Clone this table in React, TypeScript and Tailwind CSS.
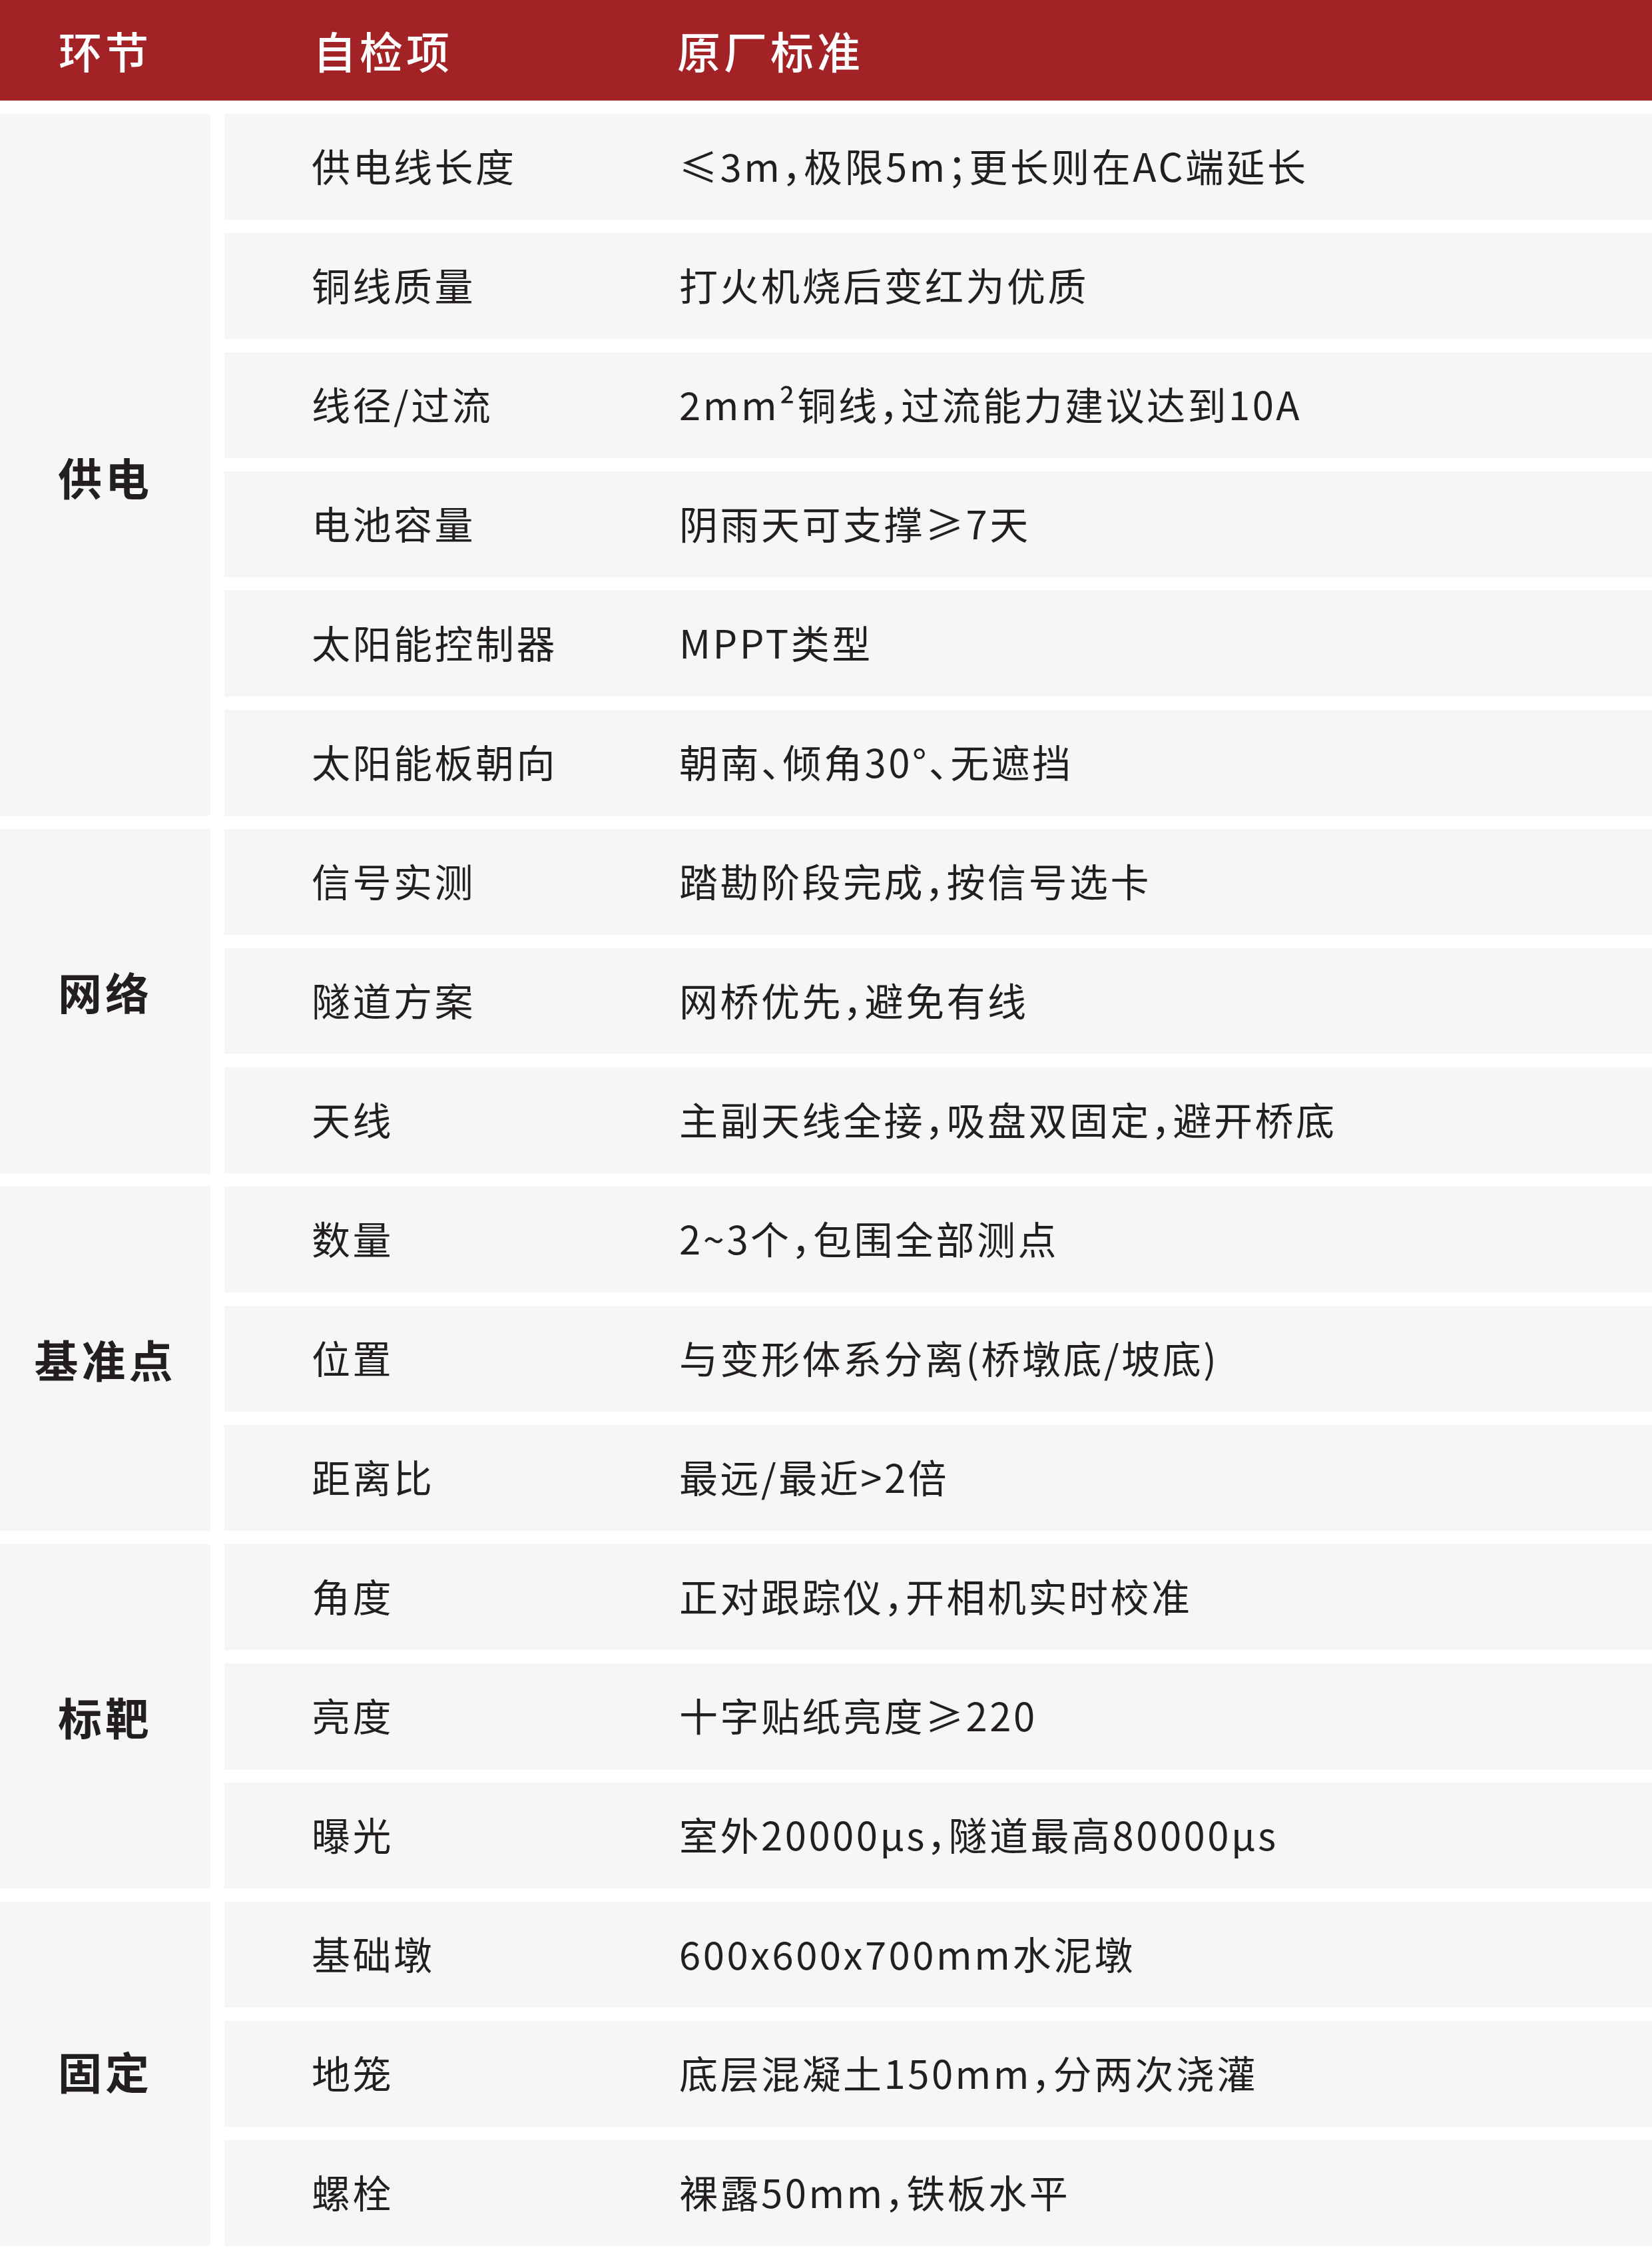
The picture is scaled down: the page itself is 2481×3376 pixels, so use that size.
import React from "react";

type Row = { item: string; standard: string };
type Group = { name: string; shift: string; rows: Row[] };

const groups: Group[] = [
  {
    name: "供电",
    shift: "pt-[34px]",
    rows: [
      { item: "供电线长度", standard: "≤3m，极限5m；更长则在AC端延长" },
      { item: "铜线质量", standard: "打火机烧后变红为优质" },
      { item: "线径/过流", standard: "2mm²铜线，过流能力建议达到10A" },
      { item: "电池容量", standard: "阴雨天可支撑≥7天" },
      { item: "太阳能控制器", standard: "MPPT类型" },
      { item: "太阳能板朝向", standard: "朝南、倾角30°、无遮挡" },
    ],
  },
  {
    name: "网络",
    shift: "pb-[30px]",
    rows: [
      { item: "信号实测", standard: "踏勘阶段完成，按信号选卡" },
      { item: "隧道方案", standard: "网桥优先，避免有线" },
      { item: "天线", standard: "主副天线全接，吸盘双固定，避开桥底" },
    ],
  },
  {
    name: "基准点",
    shift: "",
    rows: [
      { item: "数量", standard: "2~3个，包围全部测点" },
      { item: "位置", standard: "与变形体系分离(桥墩底/坡底)" },
      { item: "距离比", standard: "最远/最近>2倍" },
    ],
  },
  {
    name: "标靶",
    shift: "",
    rows: [
      { item: "角度", standard: "正对跟踪仪，开相机实时校准" },
      { item: "亮度", standard: "十字贴纸亮度≥220" },
      { item: "曝光", standard: "室外20000μs，隧道最高80000μs" },
    ],
  },
  {
    name: "固定",
    shift: "pb-[10px]",
    rows: [
      { item: "基础墩", standard: "600x600x700mm水泥墩" },
      { item: "地笼", standard: "底层混凝土150mm，分两次浇灌" },
      { item: "螺栓", standard: "裸露50mm，铁板水平" },
    ],
  },
];

export default function App() {
  return (
    <div className="w-[2481px] bg-white font-['Noto_Sans_CJK_SC','Noto_Sans',sans-serif] text-[#231f20] [font-feature-settings:'halt']">
      {/* header */}
      <div className="flex h-[151px] items-center bg-[#a32226] text-[65px] font-medium tracking-[5px] text-white">
        <div className="flex w-[316px] justify-center">环节</div>
        <div className="w-[547px] shrink-0 pl-[154px] box-content">自检项</div>
        <div>原厂标准</div>
      </div>

      <div className="mt-[20px] flex flex-col gap-[20px]">
        {groups.map((g) => (
          <div key={g.name} className="flex gap-[21px]">
            <div
              className={`flex w-[316px] shrink-0 items-center justify-center bg-[#f6f6f8] text-[66px] font-bold tracking-[5px] ${g.shift}`}
            >
              {g.name}
            </div>
            <div className="flex flex-1 flex-col gap-[20px]">
              {g.rows.map((r) => (
                <div
                  key={r.item}
                  className="flex h-[159px] items-center bg-[#f6f6f8] pb-[4px] text-[58px] tracking-[3.5px]"
                >
                  <div className="w-[683px] shrink-0 pl-[131px]">{r.item}</div>
                  <div>{r.standard}</div>
                </div>
              ))}
            </div>
          </div>
        ))}
      </div>
    </div>
  );
}
